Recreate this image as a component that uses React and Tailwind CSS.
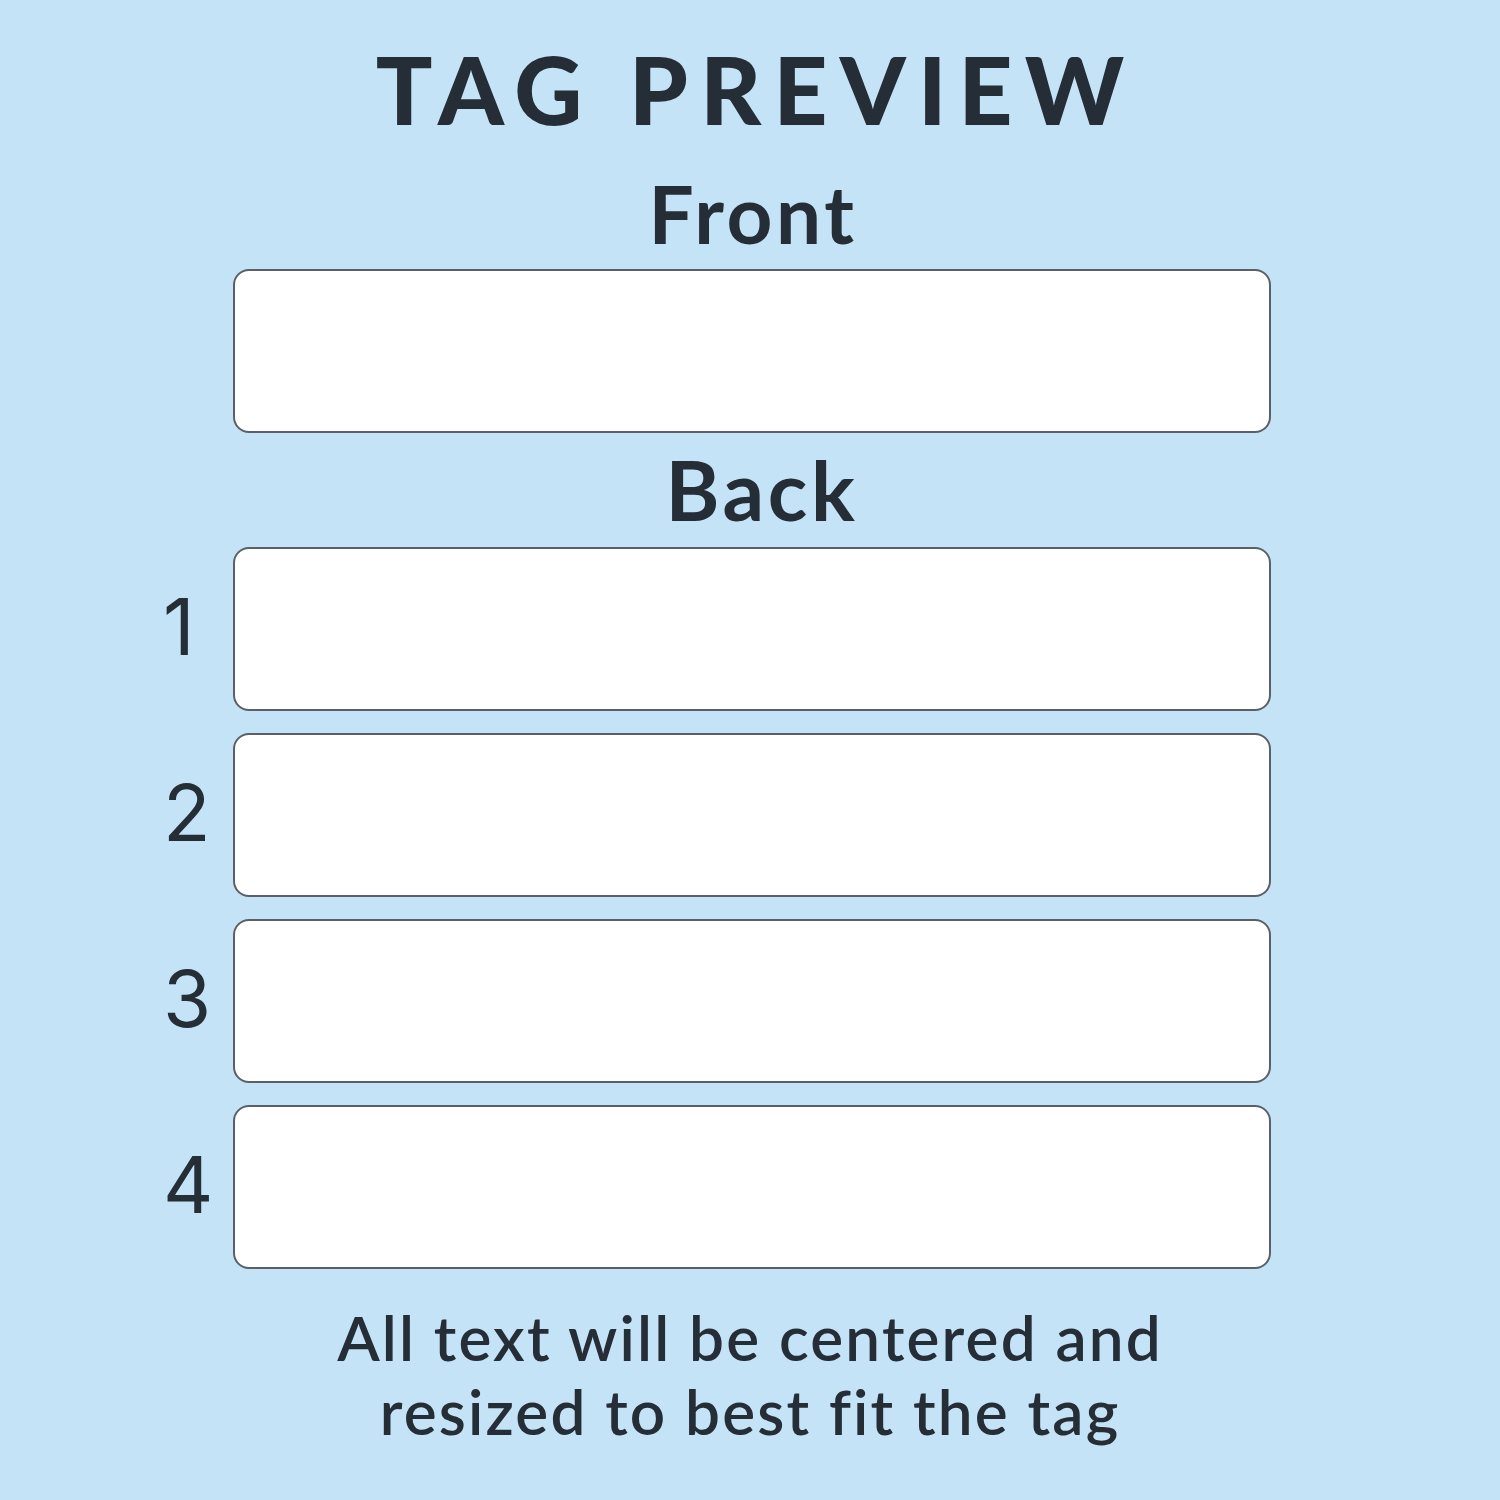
import React from "react";

const lines = [1, 2, 3, 4];

function TagField() {
    return <div className="h-[164px] w-[1038px] rounded-[16px] border-2 border-[#5b6068] bg-white" />;
}

// label column on the left, field in the middle, empty column on the right
function FieldRow({ label }) {
    return (
        <div className="grid w-[1500px] grid-cols-[233px_1038px_1fr] items-center">
            <div className="flex justify-end">
                {label && (
                    <span
                        className="mb-[4px] w-[70px] text-[78px] leading-none font-normal"
                        style={{ fontFamily: "Inter, 'Open Sans', sans-serif" }}
                    >
                        {label}
                    </span>
                )}
            </div>
            <TagField />
            <div />
        </div>
    );
}

export default function App() {
    return (
        <div
            className="min-h-[1500px] w-full bg-[#c5e3f6] text-[#252d37]"
            style={{ fontFamily: "Lato, 'Liberation Sans', sans-serif" }}
        >
            <div className="flex flex-col items-center pt-[42px]">
                <h1 className="pl-[0.13em] text-[94px] leading-none font-black tracking-[0.13em]">
                    TAG PREVIEW
                </h1>

                <h2 className="mt-[37px] pl-[6px] text-[80px] leading-none font-bold tracking-[0.045em]">
                    Front
                </h2>
                <div className="mt-[16px]">
                    <FieldRow />
                </div>

                <h2 className="mt-[15px] ml-[24px] text-[82px] leading-none font-bold tracking-[0.045em]">
                    Back
                </h2>
                <div className="mt-[17px] flex flex-col gap-[22px]">
                    {lines.map((n) => (
                        <FieldRow key={n} label={n} />
                    ))}
                </div>

                <p className="mt-[31px] text-center text-[62px] leading-[74px] font-semibold tracking-[0.035em]">
                    All text will be centered and
                    <br />
                    resized to best fit the tag
                </p>
            </div>
        </div>
    );
}
